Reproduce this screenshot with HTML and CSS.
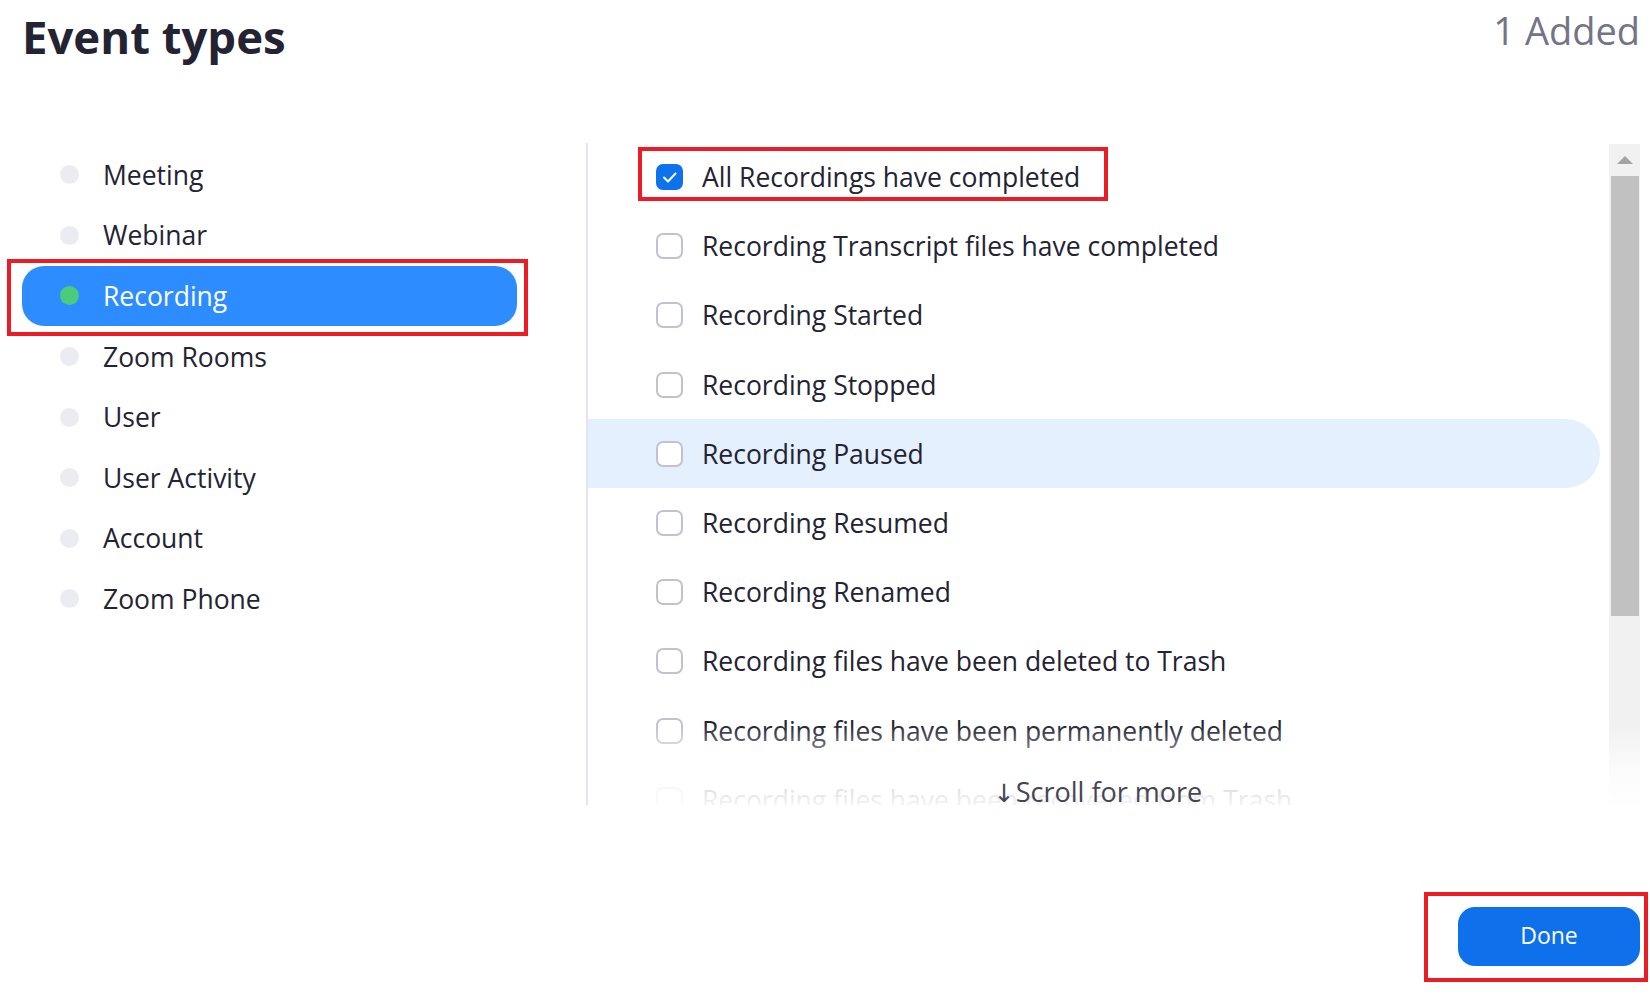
FILE: index.html
```html
<!DOCTYPE html>
<html lang="en">
<head>
<meta charset="utf-8">
<title>Event types</title>
<link rel="stylesheet" href="styles.css">
</head>
<body>
<div class="page">
  <header class="head">
    <h1 class="title">Event types</h1>
    <span class="added">1 Added</span>
  </header>

  <div class="main">
    <nav class="cats">
      <ul class="cat-list">
        <li class="cat"><span class="dot"></span><span class="cat-label">Meeting</span></li>
        <li class="cat"><span class="dot"></span><span class="cat-label">Webinar</span></li>
        <li class="cat cat-active mark mark-cat"><span class="dot"></span><span class="cat-label">Recording</span></li>
        <li class="cat"><span class="dot"></span><span class="cat-label">Zoom Rooms</span></li>
        <li class="cat"><span class="dot"></span><span class="cat-label">User</span></li>
        <li class="cat"><span class="dot"></span><span class="cat-label">User Activity</span></li>
        <li class="cat"><span class="dot"></span><span class="cat-label">Account</span></li>
        <li class="cat"><span class="dot"></span><span class="cat-label">Zoom Phone</span></li>
      </ul>
    </nav>

    <div class="events">
      <div class="list-wrap">
        <ul class="ev-list">
          <li class="ev ev-first">
            <span class="mark-ev"></span>
            <span class="cb cb-on"><svg viewBox="0 0 27 26" width="27" height="26"><polyline points="8,13.5 12,17.5 19.5,9.5" fill="none" stroke="#fff" stroke-width="2" stroke-linecap="round" stroke-linejoin="round"/></svg></span>
            <span class="ev-label">All Recordings have completed</span>
          </li>
          <li class="ev"><span class="cb"></span><span class="ev-label">Recording Transcript files have completed</span></li>
          <li class="ev"><span class="cb"></span><span class="ev-label">Recording Started</span></li>
          <li class="ev"><span class="cb"></span><span class="ev-label">Recording Stopped</span></li>
          <li class="ev ev-hover"><span class="cb"></span><span class="ev-label">Recording Paused</span></li>
          <li class="ev"><span class="cb"></span><span class="ev-label">Recording Resumed</span></li>
          <li class="ev"><span class="cb"></span><span class="ev-label">Recording Renamed</span></li>
          <li class="ev"><span class="cb"></span><span class="ev-label">Recording files have been deleted to Trash</span></li>
          <li class="ev"><span class="cb"></span><span class="ev-label">Recording files have been permanently deleted</span></li>
          <li class="ev"><span class="cb"></span><span class="ev-label">Recording files have been recovered from Trash</span></li>
        </ul>
      </div>
      <div class="scrollbar">
        <div class="sb-btn"><span class="sb-arrow"></span></div>
        <div class="sb-thumb"></div>
      </div>
      <div class="fade"><span class="more"><span class="more-arrow">↓</span>Scroll for more</span></div>
    </div>
  </div>

  <footer class="foot">
    <div class="mark mark-done"><button class="done">Done</button></div>
  </footer>
</div>
</body>
</html>
```

FILE: styles.css
```css
* { box-sizing: border-box; }

html, body {
  margin: 0;
  padding: 0;
  background: #ffffff;
}

body {
  font-family: "Open Sans", "Liberation Sans", sans-serif;
  color: #232333;
  width: 1650px;
  height: 1000px;
  overflow: hidden;
}

.page {
  width: 1650px;
  height: 1000px;
  display: flex;
  flex-direction: column;
}

/* header */
.head {
  height: 143px;
  display: flex;
  justify-content: space-between;
  align-items: flex-start;
  padding: 6px 10px 0 22px;
}

.title {
  margin: 0;
  font-size: 45.5px;
  font-weight: 700;
  line-height: 1.362;
  color: #232333;
}

.added {
  font-size: 38px;
  font-weight: 400;
  line-height: 1.362;
  color: #747487;
  margin-top: -1px;
}

/* main area */
.main {
  height: 662px;
  display: flex;
}

.cats {
  width: 588px;
  flex: none;
  border-right: 2px solid #e4e4ef;
  padding-top: 1.5px;
}

.cat-list {
  list-style: none;
  margin: 0;
  padding: 0;
}

.cat {
  height: 60.6px;
  width: 495px;
  margin-left: 22px;
  display: flex;
  align-items: center;
  font-size: 26.5px;
  color: #232333;
  border-radius: 22px;
}

.dot {
  width: 19px;
  height: 19px;
  border-radius: 50%;
  background: #ebebf2;
  margin-left: 38px;
  margin-right: 24px;
  flex: none;
}

.cat-label {
  white-space: nowrap;
}

.cat-active {
  background: #2d8cff;
  color: #ffffff;
}

.cat-active .dot {
  background: #4ccb7c;
}

/* annotation boxes */
.mark {
  position: relative;
}

.mark::after {
  content: "";
  position: absolute;
  border: 4px solid #ec1c24;
  pointer-events: none;
}

.mark-cat::after {
  top: -7px;
  bottom: -10px;
  left: -15px;
  right: -11px;
}

.mark-done {
  display: inline-block;
}

.mark-done::after {
  top: -15px;
  bottom: -16px;
  left: -34px;
  right: -8px;
}

/* events panel */
.events {
  flex: 1;
  display: flex;
  position: relative;
  margin-right: 10px;
}

.list-wrap {
  flex: 1;
  margin-right: 9px;
  overflow: hidden;
}

.ev-list {
  list-style: none;
  margin: 0;
  padding: 0;
}

.ev {
  position: relative;
  height: 69.2px;
  display: flex;
  align-items: center;
  padding-left: 68px;
  font-size: 26.5px;
  color: #232333;
}

.ev-first {
  margin-top: -0.5px;
}

.ev-hover {
  background: #e4f0fd;
  border-radius: 0 35px 35px 0;
}

.ev-label {
  white-space: nowrap;
}

.cb {
  width: 27px;
  height: 26px;
  flex: none;
  border: 2px solid #c2c1d1;
  border-radius: 7px;
  background: #ffffff;
  margin-right: 19px;
  display: flex;
}

.cb-on {
  background: #0e72ed;
  border-color: #0e72ed;
  position: relative;
}

.cb-on svg {
  position: absolute;
  left: -2px;
  top: -2px;
}

.mark-ev {
  position: absolute;
  left: 50px;
  top: 4.5px;
  width: 470px;
  height: 54px;
  border: 4px solid #ec1c24;
  pointer-events: none;
}

/* fake scrollbar */
.scrollbar {
  width: 31px;
  flex: none;
  background: #f1f1f1;
  display: flex;
  flex-direction: column;
  align-items: center;
  margin-top: 1px;
}

.sb-btn {
  height: 32px;
  width: 100%;
  display: flex;
  align-items: center;
  justify-content: center;
}

.sb-arrow {
  width: 0;
  height: 0;
  border-left: 8px solid transparent;
  border-right: 8px solid transparent;
  border-bottom: 8px solid #a3a3a3;
}

.sb-thumb {
  width: 28px;
  height: 440px;
  background: #c1c1c1;
}

/* bottom fade + hint */
.fade {
  position: absolute;
  left: 0;
  right: 0;
  bottom: 0;
  height: 80px;
  background: linear-gradient(to bottom, rgba(255,255,255,0) 0%, rgba(255,255,255,0.75) 55%, rgba(255,255,255,0.95) 100%);
  display: flex;
  justify-content: center;
  align-items: flex-end;
  pointer-events: none;
}

.more {
  font-size: 27px;
  color: #454555;
  line-height: 1.362;
  transform: translate(-16px, 6px);
  white-space: nowrap;
}

.more-arrow {
  font-family: "DejaVu Sans", sans-serif;
  font-size: 25px;
  margin-right: 1px;
}

/* footer */
.foot {
  flex: 1;
  display: flex;
  justify-content: flex-end;
  align-items: flex-start;
  padding: 102px 10px 0 0;
}

.done {
  display: block;
  width: 182px;
  height: 59px;
  border: none;
  border-radius: 17px;
  background: #0e71eb;
  color: #ffffff;
  font-family: "Open Sans", "Liberation Sans", sans-serif;
  font-size: 23px;
  line-height: 1;
  padding: 0 0 2px;
  cursor: pointer;
}
```
